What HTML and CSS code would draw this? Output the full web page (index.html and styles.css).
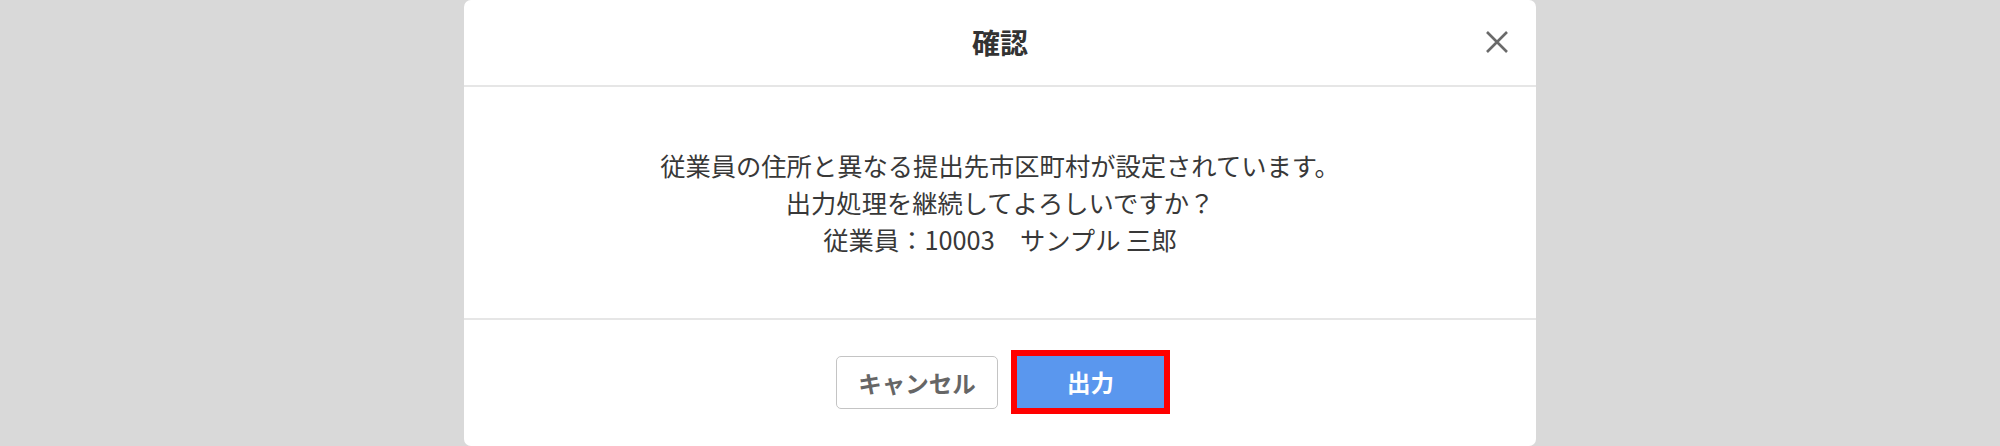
FILE: index.html
```html
<!DOCTYPE html>
<html lang="ja">

<head>
    <meta charset="UTF-8">
    <meta name="viewport" content="width=device-width, initial-scale=1.0">
    <title>確認</title>
    <link rel="stylesheet" href="styles.css">
</head>

<body>
    <div class="dialog">
        <div class="dialog-header">
            <span></span>
            <h1 class="dialog-title">確認</h1>
            <button class="close" type="button" aria-label="閉じる">
                <svg width="22" height="22" viewBox="0 0 22 22">
                    <path d="M1 1 L21 21 M21 1 L1 21" stroke="#6a6a6a" stroke-width="2.6" fill="none" />
                </svg>
            </button>
        </div>

        <div class="dialog-body">
            <p>従業員の住所と異なる提出先市区町村が設定されています。</p>
            <p>出力処理を継続してよろしいですか？</p>
            <p>従業員：10003　サンプル 三郎</p>
        </div>

        <div class="dialog-footer">
            <button class="btn btn-cancel" type="button">キャンセル</button>
            <button class="btn btn-primary marked" type="button">出力</button>
        </div>
    </div>
</body>

</html>
```

FILE: styles.css
```css
body {
    margin: 0;
    font-family: "Noto Sans CJK JP", "Noto Sans", sans-serif;
    background-color: #d9d9d9;
    height: 446px;
    overflow: hidden;
}

.dialog {
    width: 1072px;
    height: 446px;
    margin: 0 auto;
    background-color: #fff;
    border-radius: 7px;
    display: flex;
    flex-direction: column;
}

.dialog-header {
    height: 85px;
    display: grid;
    grid-template-columns: 1fr auto 1fr;
    align-items: center;
    border-bottom: 2px solid #e6e6e6;
    padding: 0 28px;
}

.dialog-title {
    margin: 0;
    font-size: 28px;
    font-weight: bold;
    color: #333;
    line-height: 85px;
}

.close {
    justify-self: end;
    width: 22px;
    height: 22px;
    padding: 0;
    border: none;
    background: none;
    display: flex;
    margin-top: -2px;
}

.dialog-body {
    height: 231px;
    display: flex;
    flex-direction: column;
    justify-content: center;
    align-items: center;
    border-bottom: 2px solid #e6e6e6;
}

.dialog-body p {
    margin: 0;
    font-size: 25.3px;
    line-height: 37px;
    color: #383838;
}

.dialog-footer {
    display: flex;
    justify-content: center;
    align-items: flex-start;
    gap: 19px;
    padding-top: 36px;
}

.btn {
    font-family: inherit;
    font-size: 23.5px;
    font-weight: bold;
    border-radius: 5px;
    cursor: pointer;
}

.btn-cancel {
    width: 162px;
    height: 53px;
    background-color: #fff;
    border: 1px solid #c4c4c4;
    color: #666;
}

.btn-primary {
    width: 147px;
    height: 52px;
    background-color: #5a97ee;
    border: none;
    border-radius: 0;
    color: #fff;
}

.marked {
    outline: 6px solid #f00;
}
```
